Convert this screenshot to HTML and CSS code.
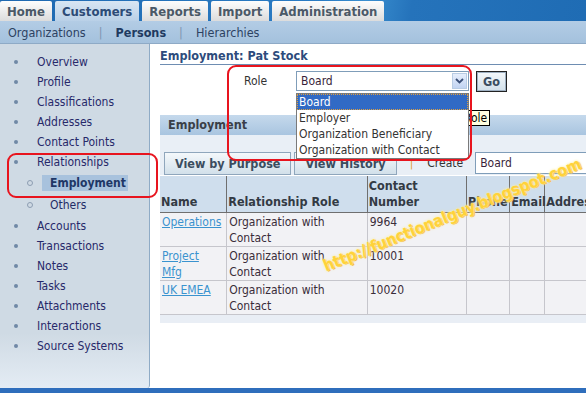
FILE: index.html
```html
<!DOCTYPE html>
<html lang="en">
<head>
    <meta charset="UTF-8">
    <title>Customers - Persons - Employment</title>
    <link rel="stylesheet" href="styles.css">
</head>
<body>

<div class="page">
    <!-- Global tabs -->
    <div class="tabs">
        <span class="tab">Home</span>
        <span class="tab active">Customers</span>
        <span class="tab">Reports</span>
        <span class="tab">Import</span>
        <span class="tab">Administration</span>
    </div>

    <!-- Sub tabs -->
    <div class="subtabs">
        <span>Organizations</span>
        <span class="sep">|</span>
        <span class="current">Persons</span>
        <span class="sep">|</span>
        <span>Hierarchies</span>
    </div>

    <div class="content">
        <!-- Side navigation -->
        <nav class="side">
            <ul>
                <li>Overview</li>
                <li>Profile</li>
                <li>Classifications</li>
                <li>Addresses</li>
                <li>Contact Points</li>
                <li>Relationships</li>
                <li class="sub selected"><span>Employment</span></li>
                <li class="sub">Others</li>
                <li>Accounts</li>
                <li>Transactions</li>
                <li>Notes</li>
                <li>Tasks</li>
                <li>Attachments</li>
                <li>Interactions</li>
                <li>Source Systems</li>
            </ul>
        </nav>

        <!-- Main region -->
        <main class="main">
            <h1 class="title">Employment: Pat Stock</h1>

            <div class="role-row">
                <label>Role</label>
                <div class="select">
                    <span>Board</span>
                    <span class="arrow">
                        <svg width="9" height="6" viewBox="0 0 9 6"><path d="M1 1 L4.5 4.5 L8 1" fill="none" stroke="#3a4f78" stroke-width="1.8"/></svg>
                    </span>
                    <ul class="options">
                        <li class="hl">Board</li>
                        <li>Employer</li>
                        <li>Organization Beneficiary</li>
                        <li>Organization with Contact</li>
                    </ul>
                    <span class="tip">Role</span>
                </div>
                <button class="btn go">Go</button>
            </div>

            <div class="panel">
                <div class="panel-head">Employment</div>
                <div class="panel-gap"></div>
                <div class="toolbar">
                    <button class="btn">View by Purpose</button>
                    <button class="btn">View History</button>
                    <span class="bar">|</span>
                    <span class="create">Create</span>
                    <div class="select wide"><span>Board</span></div>
                </div>

                <table class="grid">
                    <thead>
                        <tr>
                            <th class="c-name">Name</th>
                            <th class="c-role">Relationship Role</th>
                            <th class="c-num">Contact Number</th>
                            <th class="c-phone">Phone</th>
                            <th class="c-mail">Email</th>
                            <th class="c-addr">Address</th>
                        </tr>
                    </thead>
                    <tbody>
                        <tr>
                            <td><a href="#">Operations</a></td>
                            <td>Organization with Contact</td>
                            <td>9964</td>
                            <td></td><td></td><td></td>
                        </tr>
                        <tr>
                            <td><a href="#">Project<br>Mfg</a></td>
                            <td>Organization with Contact</td>
                            <td>10001</td>
                            <td></td><td></td><td></td>
                        </tr>
                        <tr>
                            <td><a href="#">UK EMEA</a></td>
                            <td>Organization with Contact</td>
                            <td>10020</td>
                            <td></td><td></td><td></td>
                        </tr>
                    </tbody>
                </table>
                <div class="grid-foot"></div>
            </div>
        </main>
    </div>

    <div class="bottom-bar"></div>

    <!-- Annotations drawn over the screenshot -->
    <div class="mark mark-role"></div>
    <div class="mark mark-nav"></div>
    <div class="watermark">http://functionalguy.blogspot.com</div>
</div>

</body>
</html>
```

FILE: styles.css
```css
/* General */
html, body {
    margin: 0;
    height: 100%;
    overflow: hidden;
}

body {
    font-family: "DejaVu Sans Condensed", "DejaVu Sans", sans-serif;
    font-size: 12px;
    color: #333;
    background: #fff;
}

.page {
    position: relative;
    height: 393px;
    display: flex;
    flex-direction: column;
}

/* Global tabs */
.tabs {
    height: 21px;
    display: flex;
    gap: 3px;
    background: linear-gradient(100deg, #1e68b0 0%, #2a7cc4 55%, #3a8fd0 62%, #2573bb 70%, #1f6cb4 100%);
}

.tab {
    display: flex;
    align-items: center;
    padding: 0 7px;
    margin-top: 1px;
    border-radius: 2px 2px 0 0;
    background: linear-gradient(#fdfdfd, #dcdcdc);
    color: #4b5967;
    font-weight: bold;
    font-size: 13px;
}

.tab.active {
    background: linear-gradient(#d8e6f3, #b9d0e7);
    color: #2c4b76;
}

/* Sub tabs */
.subtabs {
    height: 22px;
    display: flex;
    align-items: center;
    gap: 13px;
    padding-left: 8px;
    background: linear-gradient(#b3cce5, #a4c1dd);
    border-bottom: 1px solid #8eaac6;
    color: #2d4262;
    font-size: 12.5px;
}

.subtabs .sep {
    color: #7e95b0;
}

.subtabs .current {
    font-weight: bold;
    color: #1f3a60;
}

/* Content */
.content {
    flex: 1;
    display: flex;
    min-height: 0;
}

/* Side nav */
.side {
    width: 149px;
    flex-shrink: 0;
    border-right: 1px solid #8fabc6;
    border-bottom-right-radius: 3px;
    background: linear-gradient(#cfdae4 0%, #cfdae4 84%, #e4ecf4 100%);
}

.side ul {
    list-style: none;
    margin: 0;
    padding: 8px 0 0 0;
}

.side li {
    position: relative;
    height: 20px;
    line-height: 20px;
    padding-left: 37px;
    color: #27296a;
}

.side li::before {
    content: "";
    position: absolute;
    left: 14px;
    top: 8px;
    width: 4px;
    height: 4px;
    border-radius: 50%;
    background: #7088a6;
}

.side li.sub {
    height: 22px;
    line-height: 22px;
    padding-left: 50px;
    color: #1f2c66;
}

.side li.sub::before {
    left: 27px;
    top: 8px;
    width: 4px;
    height: 4px;
    background: none;
    border: 1px solid #8d9db2;
}

.side li.selected span {
    display: inline-block;
    margin-left: -8px;
    padding: 0 8px;
    width: 70px;
    line-height: 16px;
    background: #a8c2dd;
    font-weight: bold;
    color: #1e3766;
}

/* Main */
.main {
    flex: 1;
    padding: 5px 0 0 10px;
    min-width: 0;
}

.title {
    margin: 0;
    font-size: 12.5px;
    font-weight: bold;
    color: #2d4b7c;
    line-height: 14px;
    border-bottom: 1px solid #6e8db2;
    padding-bottom: 1px;
}

.role-row {
    display: flex;
    align-items: center;
    margin-top: 6px;
    height: 20px;
}

.role-row label {
    width: 112px;
    padding-left: 84px;
    color: #333;
    box-sizing: border-box;
}

.select {
    position: relative;
    box-sizing: border-box;
    width: 173px;
    height: 20px;
    border: 1px solid #7f9db9;
    background: #fff;
    display: flex;
    align-items: center;
    padding-left: 4px;
    color: #3a1f3a;
}

.role-row .select {
    margin-left: 24px;
}

.select .arrow {
    position: absolute;
    right: 1px;
    top: 1px;
    width: 15px;
    height: 16px;
    box-sizing: border-box;
    border: 1px solid #b8cce4;
    background: linear-gradient(#e6eefc, #c2d4f2);
    display: flex;
    align-items: center;
    justify-content: center;
}

.options {
    position: absolute;
    left: -1px;
    top: 21px;
    width: 173px;
    box-sizing: border-box;
    margin: 0;
    padding: 0;
    list-style: none;
    background: #fff;
    border: 1px solid #7a7a7a;
    z-index: 3;
}

.options li {
    height: 16px;
    line-height: 16px;
    padding-left: 2px;
    color: #333;
}

.options li.hl {
    background: #316ac5;
    color: #fff;
    outline: 1px dotted #e0a040;
    outline-offset: -1px;
}

.tip {
    position: absolute;
    left: 164px;
    top: 38px;
    height: 14px;
    line-height: 14px;
    padding: 0 2px;
    background: #ffffe1;
    border: 1px solid #000;
    color: #000;
    z-index: 2;
}

.btn {
    font-family: inherit;
    font-size: 12.5px;
    font-weight: bold;
    color: #3b4d5f;
    height: 23px;
    padding: 0 10px;
    border: 1px solid #8fa6bc;
    background: linear-gradient(#f4f8fb, #d2e0ea);
    white-space: nowrap;
    flex-shrink: 0;
    cursor: pointer;
}

.btn.go {
    height: 21px;
    margin-left: 7px;
    padding: 0 6px;
    border: 1px solid #222;
    outline: 1px solid #9eb0c2;
    outline-offset: -2px;
}

/* Panel */
.panel {
    margin-top: 24px;
}

.panel-head {
    height: 20px;
    line-height: 20px;
    padding-left: 8px;
    background: linear-gradient(#c5d9ec, #a9c5e0);
    font-weight: bold;
    font-size: 12.5px;
    color: #3a3f48;
}

.panel-gap {
    height: 16px;
    background: #e9eff6;
}

.toolbar {
    display: flex;
    align-items: center;
    height: 24px;
    padding-left: 4px;
    background: #e9eff6;
    white-space: nowrap;
}

.toolbar .btn + .btn {
    margin-left: 3px;
}

.toolbar .bar {
    margin-left: 13px;
    color: #e0a040;
}

.toolbar .create {
    margin-left: 14px;
    color: #333;
}

.toolbar .select.wide {
    margin-left: 12px;
    width: 120px;
    height: 22px;
    flex-shrink: 0;
}

/* Table */
.grid {
    border-collapse: collapse;
    width: 440px;
    table-layout: fixed;
    margin-top: 1px;
}

.grid th {
    height: 34px;
    vertical-align: bottom;
    text-align: left;
    padding: 0 1px 2px 1px;
    background: #cfdeed;
    font-weight: bold;
    font-size: 12.5px;
    line-height: 16px;
    color: #333a44;
    border-left: 1px solid #6f6f6f;
    border-bottom: 1px solid #6f6f6f;
    white-space: normal;
}

.grid th:first-child {
    border-left: none;
}

.grid td {
    height: 32px;
    vertical-align: top;
    padding: 1px 2px 0 2px;
    line-height: 16px;
    background: #f2f2f5;
    border: 1px solid #c6c6cc;
    color: #3a2d3a;
}

.grid td:first-child {
    border-left: none;
}

.grid a {
    color: #3a93cf;
}

.c-name { width: 64px; }
.c-role { width: 137px; }
.c-num { width: 96px; }
.c-phone { width: 40px; }
.c-mail { width: 32px; }
.c-addr { width: 52px; }

.grid-foot {
    height: 8px;
    background: #e9eef5;
}

/* Bottom bar */
.bottom-bar {
    height: 5px;
    background: #2f6ebc;
}

/* Annotations */
.mark {
    position: absolute;
    border: 2px solid #e8141e;
    border-radius: 9px;
    z-index: 5;
    pointer-events: none;
}

.mark-role {
    left: 227px;
    top: 65px;
    width: 241px;
    height: 92px;
}

.mark-nav {
    left: 7px;
    top: 153px;
    width: 147px;
    height: 41px;
}

.watermark {
    position: absolute;
    left: 324px;
    top: 257px;
    transform: rotate(-22deg);
    transform-origin: left center;
    font-family: "DejaVu Sans Condensed", "DejaVu Sans", sans-serif;
    font-weight: bold;
    font-size: 16px;
    color: #ffd23a;
    text-shadow: 0 0 2px #fff6c0, 0 0 3px #ffe890, 1px 1px 0 #f0b020;
    white-space: nowrap;
    z-index: 6;
}
```
